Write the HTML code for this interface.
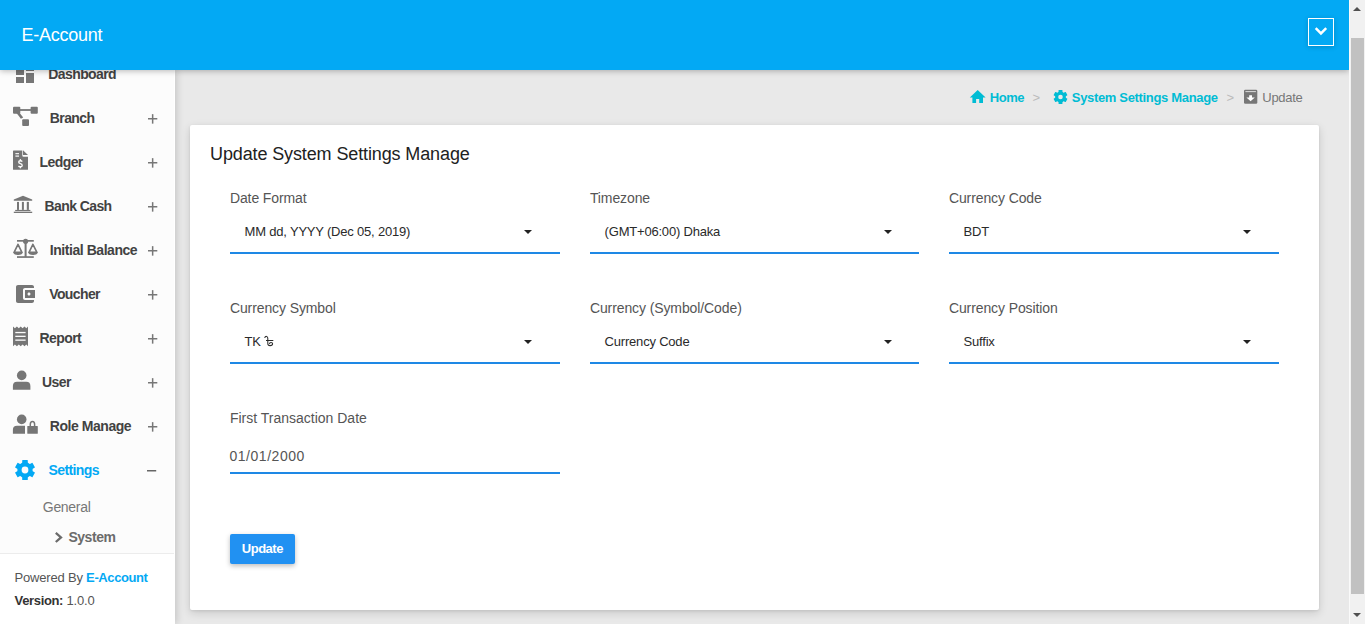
<!DOCTYPE html>
<html><head><meta charset="utf-8">
<style>
*{box-sizing:border-box;margin:0;padding:0}
html,body{width:1365px;height:624px;overflow:hidden;background:#e9e9e9;font-family:"Liberation Sans",sans-serif}
.a{position:absolute;white-space:nowrap;line-height:1}
#hdr{position:absolute;left:0;top:0;width:1349px;height:70px;background:#03a9f4;box-shadow:0 1px 6px rgba(0,0,0,.28);z-index:5}
#side{position:absolute;left:0;top:70px;width:175px;height:554px;background:#fcfcfc;box-shadow:2px 0 7px rgba(0,0,0,.15);z-index:3}
#sb{position:absolute;left:1349px;top:0;width:16px;height:624px;background:#f1f1f1;border-left:1px solid #fafafa;z-index:9}
.nav{font-size:14px;font-weight:bold;color:#424242;letter-spacing:-0.6px;z-index:4}
.lbl{font-size:14px;color:#555;letter-spacing:-0.1px}
.val{font-size:13px;color:#2a2a2a;letter-spacing:-0.2px}
.ul{position:absolute;height:2px;background:#1e88e5}
.car{position:absolute;width:0;height:0;border-left:4px solid transparent;border-right:4px solid transparent;border-top:4px solid #222}
</style></head><body>
<div id="hdr">
  <div class="a" style="left:21.5px;top:25.76px;font-size:18px;color:#fff;letter-spacing:-0.25px">E-Account</div>
  <div style="position:absolute;left:1308px;top:18px;width:26px;height:28px;border:1px solid #fff;box-shadow:0 1px 5px rgba(0,0,0,.18)">
    <svg width="24" height="26" style="position:absolute;left:0;top:0"><path d="M6.7 9.2 L11.95 14.4 L17.2 9.2" stroke="#fff" stroke-width="2.5" fill="none"/></svg>
  </div>
</div>

<div id="side"></div>
<svg style="position:absolute;left:0;top:0;z-index:4" width="175" height="624">
<g transform="translate(13,62)" fill="#767676"><path d="M3 13h8V3H3v10zm0 8h8v-6H3v6zm10 0h8V11h-8v10zm0-18v6h8V3h-8z"/></g><g fill="#767676">
<rect x="13" y="106.7" width="7.3" height="7" rx="1"/>
<rect x="30.6" y="106.7" width="7.2" height="7" rx="1"/>
<rect x="22.2" y="119.2" width="6.8" height="6.8" rx="1"/>
<rect x="19" y="109.1" width="12" height="1.8"/>
<path d="M16.3 112.8 L18.6 111.4 L23.2 117.4 L20.9 118.8 Z"/>
</g><g fill="#767676">
<path d="M13.6 150.5 H22.3 V155.6 Q22.3 156.8 23.5 156.8 H28 V169.3 Q28 169.8 27.5 169.8 H13.5 Q13 169.8 13 169.3 V151.1 Q13 150.5 13.6 150.5 Z"/>
<path d="M23 150.3 L28 155 L23 155 Z"/>
</g>
<g fill="#fcfcfc">
<rect x="15.4" y="153.1" width="3.6" height="1.1"/>
<rect x="15.4" y="155.5" width="3.6" height="1.2"/>
</g>
<path d="M22.2 161.6 Q21.7 160.7 20.4 160.7 Q18.7 160.7 18.7 162.1 Q18.7 163.4 20.4 163.7 Q22.2 164.1 22.2 165.4 Q22.2 166.7 20.4 166.7 Q19 166.7 18.5 165.8" fill="none" stroke="#fcfcfc" stroke-width="1.35"/>
<rect x="19.75" y="159.1" width="1.3" height="1.8" fill="#fcfcfc"/><rect x="19.75" y="166.5" width="1.3" height="1.8" fill="#fcfcfc"/><g fill="#767676">
<path d="M23 195.8 L32.2 199.6 L32.2 200.8 L13.8 200.8 L13.8 199.6 Z"/>
<rect x="17" y="201.9" width="2" height="8"/>
<rect x="21.9" y="201.9" width="2" height="8"/>
<rect x="26.8" y="201.9" width="2.1" height="8"/>
<rect x="15.2" y="209.9" width="15.2" height="1.2"/>
<rect x="13.8" y="211.7" width="18.4" height="1.3"/>
</g><g fill="#767676">
<rect x="17" y="240" width="16.8" height="1.7"/>
<circle cx="25.6" cy="241.3" r="2.6"/>
<rect x="24.6" y="241" width="2" height="16"/>
<rect x="17" y="256.2" width="16.8" height="1.7"/>
</g>
<g fill="none" stroke="#767676" stroke-width="1.6" stroke-linejoin="round">
<path d="M18 244.3 L14.2 252.2 L21.8 252.2 Z"/>
<path d="M32.9 244.3 L29.1 252.2 L36.8 252.2 Z"/>
</g>
<g fill="#767676">
<path d="M13.2 252 H22.8 Q22.6 255 18 255 Q13.4 255 13.2 252 Z"/>
<path d="M28.1 252 H37.8 Q37.6 255 33 255 Q28.3 255 28.1 252 Z"/>
</g><g transform="translate(13,282)" fill="#767676"><path d="M21 18v1c0 1.1-.9 2-2 2H5c-1.11 0-2-.9-2-2V5c0-1.1.89-2 2-2h14c1.1 0 2 .9 2 2v1h-9c-1.11 0-2 .9-2 2v8c0 1.1.89 2 2 2h9zm-9-2h10V8H12v8zm4-2.5c-.83 0-1.5-.67-1.5-1.5s.67-1.5 1.5-1.5 1.5.67 1.5 1.5-.67 1.5-1.5 1.5z"/></g><g fill="#767676">
<path d="M13 326.5 L14.9 328.3 L16.9 326.5 L18.8 328.3 L20.7 326.5 L22.6 328.3 L24.5 326.5 L26.3 328.3 L28 326.5 L28 346.2 L26.3 344.5 L24.5 346.2 L22.6 344.5 L20.7 346.2 L18.8 344.5 L16.9 346.2 L14.9 344.5 L13 346.2 Z"/>
</g>
<g fill="#fcfcfc">
<rect x="15.3" y="331.9" width="10.3" height="1.3"/>
<rect x="15.3" y="335.7" width="10.3" height="1.3"/>
<rect x="15.3" y="339.5" width="10.3" height="1.3"/>
</g><g fill="#767676">
<circle cx="21.7" cy="375.4" r="4.8"/>
<path d="M12.9 389.8 V386 Q12.9 381.7 17 381.7 H26.3 Q30.4 381.7 30.4 386 V389.8 Z"/>
</g><g fill="#767676">
<circle cx="21.7" cy="419.4" r="4.8"/>
<path d="M12.9 433.8 V430 Q12.9 425.8 17 425.8 H25 V433.8 Z"/>
<rect x="27.3" y="425.9" width="10.5" height="7.9" rx="0.6"/>
</g>
<path d="M30.3 426 V424.2 Q30.3 421.4 32.5 421.4 Q34.6 421.4 34.6 424.2 V426" fill="none" stroke="#767676" stroke-width="1.5"/><circle cx="25" cy="470" r="7.7" fill="#03a9f4"/><rect x="22.2" y="460" width="5.6" height="10" rx="0.6" fill="#03a9f4" transform="rotate(0 25 470)"/><rect x="22.2" y="460" width="5.6" height="10" rx="0.6" fill="#03a9f4" transform="rotate(60 25 470)"/><rect x="22.2" y="460" width="5.6" height="10" rx="0.6" fill="#03a9f4" transform="rotate(120 25 470)"/><rect x="22.2" y="460" width="5.6" height="10" rx="0.6" fill="#03a9f4" transform="rotate(180 25 470)"/><rect x="22.2" y="460" width="5.6" height="10" rx="0.6" fill="#03a9f4" transform="rotate(240 25 470)"/><rect x="22.2" y="460" width="5.6" height="10" rx="0.6" fill="#03a9f4" transform="rotate(300 25 470)"/><circle cx="25" cy="470" r="3.4" fill="#fcfcfc"/><path d="M55.8 532.8 L61 537.4 L55.8 542" fill="none" stroke="#6b6b6b" stroke-width="2.3"/><rect x="148" y="118.0" width="9.3" height="1.5" fill="#777"/><rect x="151.9" y="114.15" width="1.5" height="9.5" fill="#777"/><rect x="148" y="162.0" width="9.3" height="1.5" fill="#777"/><rect x="151.9" y="158.15" width="1.5" height="9.5" fill="#777"/><rect x="148" y="206.0" width="9.3" height="1.5" fill="#777"/><rect x="151.9" y="202.15" width="1.5" height="9.5" fill="#777"/><rect x="148" y="250.0" width="9.3" height="1.5" fill="#777"/><rect x="151.9" y="246.15" width="1.5" height="9.5" fill="#777"/><rect x="148" y="294.0" width="9.3" height="1.5" fill="#777"/><rect x="151.9" y="290.15" width="1.5" height="9.5" fill="#777"/><rect x="148" y="338.0" width="9.3" height="1.5" fill="#777"/><rect x="151.9" y="334.15" width="1.5" height="9.5" fill="#777"/><rect x="148" y="382.0" width="9.3" height="1.5" fill="#777"/><rect x="151.9" y="378.15" width="1.5" height="9.5" fill="#777"/><rect x="148" y="426.0" width="9.3" height="1.5" fill="#777"/><rect x="151.9" y="422.15" width="1.5" height="9.5" fill="#777"/><rect x="147" y="470" width="9.2" height="1.5" fill="#666"/>
<rect x="0" y="554" width="175" height="70" fill="#fff"/><rect x="174" y="70" width="1" height="484" fill="#fff"/><rect x="0" y="553" width="174" height="1" fill="#ececec"/>
</svg>
<div class="a nav" style="left:48.3px;top:67.15px;letter-spacing:-0.6px">Dashboard</div>
<div class="a nav" style="left:49.8px;top:111.15px;letter-spacing:-0.6px">Branch</div>
<div class="a nav" style="left:39.6px;top:155.15px;letter-spacing:-0.6px">Ledger</div>
<div class="a nav" style="left:44.6px;top:199.15px;letter-spacing:-0.6px">Bank Cash</div>
<div class="a nav" style="left:49.8px;top:243.15px;letter-spacing:-0.45px">Initial Balance</div>
<div class="a nav" style="left:49.2px;top:287.15px;letter-spacing:-0.6px">Voucher</div>
<div class="a nav" style="left:39.6px;top:331.15px;letter-spacing:-0.6px">Report</div>
<div class="a nav" style="left:42px;top:375.15px;letter-spacing:-0.6px">User</div>
<div class="a nav" style="left:49.8px;top:419.15px;letter-spacing:-0.45px">Role Manage</div>
<div class="a nav" style="left:48.5px;top:463.15px;color:#03a9f4">Settings</div>

<div class="a" style="left:42.8px;top:500.15px;font-size:14px;color:#777;z-index:4;letter-spacing:-0.3px">General</div>
<div class="a" style="left:68.4px;top:530.15px;font-size:14px;font-weight:bold;color:#6b6b6b;z-index:4;letter-spacing:-0.45px">System</div>
<div class="a" style="left:14.6px;top:571.00px;font-size:13px;color:#555;z-index:4;letter-spacing:-0.2px">Powered By <b style="color:#03a9f4;letter-spacing:-0.4px">E-Account</b></div>
<div class="a" style="left:14.6px;top:594.00px;font-size:13px;color:#555;z-index:4;letter-spacing:-0.2px"><b style="color:#333;letter-spacing:-0.35px">Version:</b> 1.0.0</div>

<div id="sb">
  <div style="position:absolute;left:1px;top:38px;width:13px;height:556px;background:#c1c1c1"></div>
  <div style="position:absolute;left:3px;top:7px;width:0;height:0;border-left:4.5px solid transparent;border-right:4.5px solid transparent;border-bottom:4px solid #505050"></div>
  <div style="position:absolute;left:3px;top:613px;width:0;height:0;border-left:4.5px solid transparent;border-right:4.5px solid transparent;border-top:4px solid #505050"></div>
</div>

<!-- breadcrumb -->
<svg style="position:absolute;left:0;top:0" width="1350" height="120">
<path d="M977.7 90 L985.6 97.4 H983 V103 H979.2 V99 H976.1 V103 H972.4 V97.4 H969.8 Z" fill="#00bcd4"/>
<circle cx="1060.5" cy="97" r="5.4" fill="#00bcd4"/><rect x="1058.55" y="90" width="3.9" height="7" rx="0.6" fill="#00bcd4" transform="rotate(0 1060.5 97)"/><rect x="1058.55" y="90" width="3.9" height="7" rx="0.6" fill="#00bcd4" transform="rotate(60 1060.5 97)"/><rect x="1058.55" y="90" width="3.9" height="7" rx="0.6" fill="#00bcd4" transform="rotate(120 1060.5 97)"/><rect x="1058.55" y="90" width="3.9" height="7" rx="0.6" fill="#00bcd4" transform="rotate(180 1060.5 97)"/><rect x="1058.55" y="90" width="3.9" height="7" rx="0.6" fill="#00bcd4" transform="rotate(240 1060.5 97)"/><rect x="1058.55" y="90" width="3.9" height="7" rx="0.6" fill="#00bcd4" transform="rotate(300 1060.5 97)"/><circle cx="1060.5" cy="97" r="2.3" fill="#e9e9e9"/>
<g fill="#777">
<rect x="1244" y="89.7" width="13.3" height="14.1" rx="1.3"/>
</g>
<rect x="1245.4" y="91.2" width="10.5" height="0.9" fill="#e9e9e9"/>
<path d="M1249.2 95.2 H1252 V97.4 H1254.8 L1250.6 101.3 L1246.4 97.4 H1249.2 Z" fill="#fff"/>
</svg>
<div class="a" style="left:989.8px;top:91.00px;font-size:13px;font-weight:bold;color:#00bcd4;letter-spacing:-0.5px">Home</div>
<div class="a" style="left:1032.5px;top:91.00px;font-size:13px;color:#bbb">&gt;</div>
<div class="a" style="left:1071.8px;top:91.00px;font-size:13px;font-weight:bold;color:#00bcd4;letter-spacing:-0.33px">System Settings Manage</div>
<div class="a" style="left:1226.5px;top:91.00px;font-size:13px;color:#bbb">&gt;</div>
<div class="a" style="left:1262.3px;top:91.00px;font-size:13px;color:#777;letter-spacing:-0.3px">Update</div>

<!-- card -->
<div style="position:absolute;left:190px;top:125px;width:1129px;height:485px;background:#fff;border-radius:2px;box-shadow:0 3px 10px rgba(0,0,0,.14),0 1px 3px rgba(0,0,0,.08)"></div>
<div class="a" style="left:210px;top:144.76px;font-size:18px;color:#212121;letter-spacing:-0.12px">Update System Settings Manage</div>
<div class="a lbl" style="left:229.9px;top:190.85px">Date Format</div>
<div class="a val" style="left:244.6px;top:225.00px">MM dd, YYYY (Dec 05, 2019)</div>
<div class="ul" style="left:230px;top:252px;width:330px"></div>
<div class="car" style="left:524px;top:230px"></div>
<div class="a lbl" style="left:589.9px;top:190.85px">Timezone</div>
<div class="a val" style="left:604.6px;top:225.00px">(GMT+06:00) Dhaka</div>
<div class="ul" style="left:590px;top:252px;width:329px"></div>
<div class="car" style="left:884px;top:230px"></div>
<div class="a lbl" style="left:948.9px;top:190.85px">Currency Code</div>
<div class="a val" style="left:963.6px;top:225.00px">BDT</div>
<div class="ul" style="left:949px;top:252px;width:330px"></div>
<div class="car" style="left:1243px;top:230px"></div>
<div class="a lbl" style="left:229.9px;top:300.85px">Currency Symbol</div>
<div class="a val" style="left:244.6px;top:335.00px">TK</div>
<div class="ul" style="left:230px;top:362px;width:330px"></div>
<div class="car" style="left:524px;top:340px"></div>
<div class="a lbl" style="left:589.9px;top:300.85px">Currency (Symbol/Code)</div>
<div class="a val" style="left:604.6px;top:335.00px">Currency Code</div>
<div class="ul" style="left:590px;top:362px;width:329px"></div>
<div class="car" style="left:884px;top:340px"></div>
<div class="a lbl" style="left:948.9px;top:300.85px">Currency Position</div>
<div class="a val" style="left:963.6px;top:335.00px">Suffix</div>
<div class="ul" style="left:949px;top:362px;width:330px"></div>
<div class="car" style="left:1243px;top:340px"></div>
<div class="a lbl" style="left:229.9px;top:410.85px;letter-spacing:0px">First Transaction Date</div>
<div class="a" style="left:229.4px;top:448.95px;font-size:14px;color:#555;letter-spacing:0.55px">01/01/2000</div>
<div class="ul" style="left:230px;top:472px;width:330px"></div>

<svg style="position:absolute;left:0;top:0" width="400" height="400">
<path d="M264.6 337.9 Q265.2 336.3 266.5 336.4 Q267.8 336.5 267.8 338.2 V343.5 Q267.8 345.6 270.1 345.6 Q272.6 345.6 272.6 343.8 Q272.6 342.4 271 342.4 Q269.5 342.4 269.5 343.9" fill="none" stroke="#2a2a2a" stroke-width="1.05"/>
<rect x="266" y="340" width="7.3" height="1" fill="#2a2a2a"/>
</svg>
<div style="position:absolute;left:230px;top:534px;width:65px;height:30px;background:#2191f2;border-radius:2px;box-shadow:0 2px 5px rgba(0,0,0,.26)"></div>
<div class="a" style="left:241.8px;top:542.00px;font-size:13px;font-weight:bold;color:#fff;letter-spacing:-0.5px">Update</div>
</body></html>
